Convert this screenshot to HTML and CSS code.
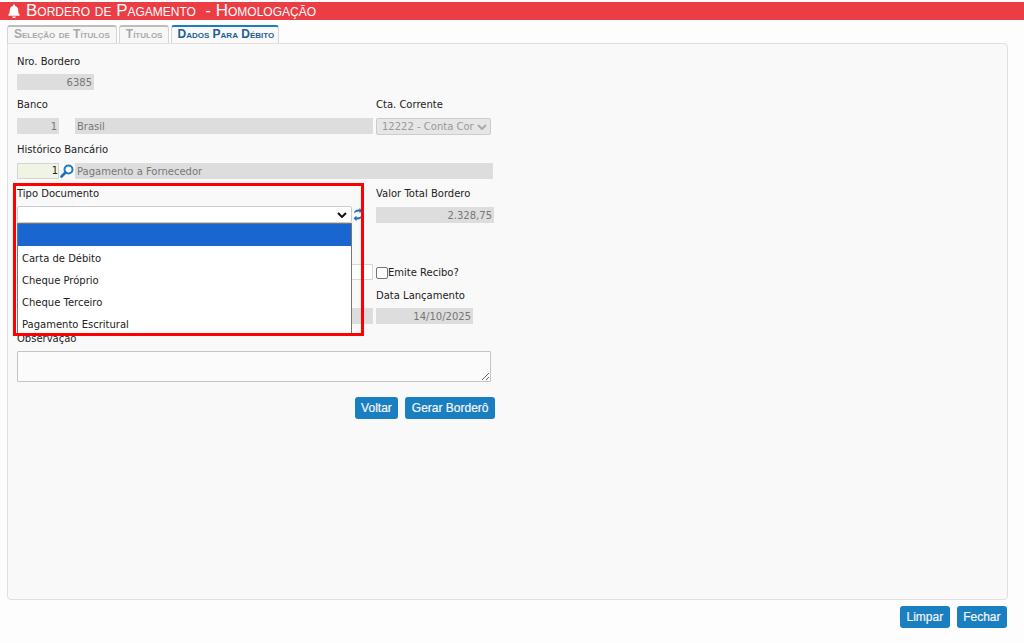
FILE: index.html
```html
<!DOCTYPE html>
<html lang="pt-BR">
<head>
<meta charset="utf-8">
<title>Bordero de Pagamento</title>
<link rel="stylesheet" href="styles.css">
</head>
<body>
<header class="title-bar">
  <svg class="bell" viewBox="0 0 12 14" width="12" height="14"><path d="M6 0.5c.6 0 1 .4 1 1v.5c2 .4 3.2 2 3.2 4 0 3 .6 3.800 1.500 4.800.3.400 0 .9-.4.9H.7c-.4 0-.7-.5-.4-.9C1.200 9.800 1.800 9 1.800 6c0-2 1.200-3.600 3.200-4v-.5c0-.6.400-1 1-1zM4.300 12.500h3.400c0 1-.7 1.500-1.700 1.500s-1.700-.5-1.700-1.500z" fill="#fff"/></svg>
  <h1 class="title">Bordero de Pagamento &nbsp;- Homologação</h1>
</header>
<nav class="tabs">
  <span class="tab">Seleção de Títulos</span>
  <span class="tab">Títulos</span>
  <span class="tab active">Dados Para Débito</span>
</nav>
<main class="panel">
  <div class="row row-a">
    <div class="field tight">
      <label class="label">Nro. Bordero</label>
      <div class="input ro right w-nro">6385</div>
    </div>
  </div>
  <div class="row row-b">
    <div class="field col-left">
      <label class="label">Banco</label>
      <div class="controls gap-16">
        <div class="input ro right w-banco">1</div>
        <div class="input ro grow">Brasil</div>
      </div>
    </div>
    <div class="field">
      <label class="label">Cta. Corrente</label>
      <div class="fake-select disabled">12222 - Conta Cor<svg class="chev" viewBox="0 0 10 6" width="10" height="6"><path d="M1 1l4 4 4-4" fill="none" stroke="#aaa" stroke-width="2"/></svg></div>
    </div>
  </div>
  <div class="row row-c">
    <div class="field wide">
      <label class="label">Histórico Bancário</label>
      <div class="controls">
        <div class="input edit right w-hist">1</div>
        <svg class="search" viewBox="0 0 14 14" width="14" height="14"><circle cx="8.500" cy="5.500" r="4" fill="#fff" stroke="#1c7bc4" stroke-width="2"/><path d="M5.500 8.500L1.500 12.500" stroke="#1c6fb8" stroke-width="2.600" stroke-linecap="round"/></svg>
        <div class="input ro grow">Pagamento a Fornecedor</div>
      </div>
    </div>
  </div>
  <div class="row row-d">
    <div class="field col-left tight">
      <label class="label">Tipo Documento</label>
      <div class="controls">
        <div class="fake-select open">&nbsp;<svg class="chev" viewBox="0 0 10 6" width="10" height="6"><path d="M1 1l4 4 4-4" fill="none" stroke="#111" stroke-width="2"/></svg></div>
        <svg class="refresh" viewBox="0 0 10 15" width="10" height="15"><path d="M1 6.500C1 3.500 3.500 2 6.500 2.500V.8L9.500 3.800 6.500 6.300V4.700C4.500 4.300 3 5 1 6.500zM9 8.500c0 3-2.500 4.500-5.500 4V14.200L.5 11.200 3.500 8.700v1.600C5.500 10.700 7 10 9 8.500z" fill="#1c74c9"/></svg>
      </div>
    </div>
    <div class="field">
      <label class="label">Valor Total Bordero</label>
      <div class="input ro right w-valor">2.328,75</div>
    </div>
  </div>
  <div class="row row-e">
    <div class="input plain col-left-input"></div>
    <label class="check"><span class="box"></span>Emite Recibo?</label>
  </div>
  <div class="row row-f">
    <div class="field col-left tight">
      <label class="label">&nbsp;</label>
      <div class="input ro col-left-input"></div>
    </div>
    <div class="field tight">
      <label class="label">Data Lançamento</label>
      <div class="input ro right w-data">14/10/2025</div>
    </div>
  </div>
  <div class="row-g">
    <label class="label">Observação</label>
    <textarea class="obs"></textarea>
  </div>
  <div class="actions">
    <button class="btn">Voltar</button>
    <button class="btn">Gerar Borderô</button>
  </div>

  <ul class="dropdown">
    <li class="opt selected">&nbsp;</li>
    <li class="opt">Carta de Débito</li>
    <li class="opt">Cheque Próprio</li>
    <li class="opt">Cheque Terceiro</li>
    <li class="opt">Pagamento Escritural</li>
  </ul>
  <div class="highlight"></div>
</main>
<footer class="footer">
  <button class="btn">Limpar</button>
  <button class="btn">Fechar</button>
</footer>
</body>
</html>
```
FILE: styles.css
```css
* { box-sizing: border-box; }
html, body { height: 100%; }
body {
  margin: 0;
  padding-top: 2px;
  background: #fdfdfd;
  font-family: "DejaVu Sans", Verdana, sans-serif;
  font-size: 10px;
  color: #222;
  overflow: hidden;
}
.title-bar {
  height: 18px;
  background: #ec3c44;
  display: flex;
  align-items: center;
  padding-left: 8px;
  gap: 6px;
}
.bell { flex: none; }
.title {
  margin: 0;
  font: normal 17px/18px "Liberation Sans", Arial, sans-serif;
  font-variant: small-caps;
  color: #fff;
}
.tabs {
  display: flex;
  gap: 2px;
  height: 20px;
  margin-top: 4px;
  padding-left: 7px;
  align-items: flex-end;
}
.tab {
  height: 19px;
  padding: 0 6px 0 6px;
  border: 1px solid #d5d5d5;
  border-bottom: 0;
  border-top: 2px solid #bdbdbd;
  border-radius: 3px 3px 0 0;
  background: #f7f7f7;
  color: #a9a9a9;
  font: bold 12px/15px "Liberation Sans", Arial, sans-serif;
  font-variant: small-caps;
}
.tab.active {
  height: 20px;
  color: #1f5f94;
  border-top: 2px solid #1b7cc0;
  background: #f9f9f9;
  position: relative;
  margin-bottom: -1px;
  padding: 0 4px 0 5px;
}
.panel {
  position: relative;
  margin: -1px 16px 0 7px;
  height: 557px;
  border: 1px solid #dfdfdf;
  border-radius: 0 4px 4px 4px;
  background: #f9f9f9;
  padding: 11px 9px 0 9px;
}
.row { display: flex; gap: 3px; }
.row-a { height: 43px; }
.row-b { height: 45px; }
.row-c { height: 44px; }
.row-d { height: 58px; }
.row-e { height: 25px; align-items: flex-start; margin-top: 19px; }
.row-f { height: 44px; }
.row-g { display: flex; flex-direction: column; margin-top: -1px; }
.field { display: flex; flex-direction: column; }
.col-left { width: 356px; }
.wide { width: 476px; }
.label { height: 20px; line-height: 13px; color: #222; }
.tight > .label { height: 19px; }
.row-g > .label { height: 19px; }
.controls { display: flex; align-items: center; }
.gap-16 { gap: 16px; }
.grow { flex: 1; }
.input {
  height: 16px;
  line-height: 16px;
  padding: 1px 2px 0;
  color: #777;
  overflow: hidden;
  white-space: nowrap;
}
.ro { background: #dddddd; }
.right { text-align: right; }
.w-nro { width: 77px; }
.w-banco { width: 42px; }
.w-hist { width: 42px; color: #222; }
.w-valor { width: 118px; }
.w-data { width: 97px; }
.col-left-input { width: 356px; }
.edit { background: #f0f4e4; border: 1px solid #d4d4d4; line-height: 14px; padding: 0 0 0 2px; }
.plain { background: #fff; border: 1px solid #d8d8d8; }
.search { flex: none; margin: 0 1px; }
.refresh { flex: none; margin-left: 1px; }
.fake-select {
  height: 17px;
  background: #fff;
  border: 1px solid #ccc;
  border-radius: 2px;
  line-height: 15px;
  display: flex;
  align-items: center;
  justify-content: space-between;
  padding: 0 4px;
  overflow: hidden;
  white-space: nowrap;
}
.fake-select.open { width: 335px; }
.fake-select.disabled {
  width: 115px;
  background: #e6e6e6;
  color: #999;
  padding: 0 3px 0 5px;
  overflow: hidden;
}
.chev { flex: none; }
.check { display: flex; align-items: center; height: 13px; line-height: 13px; margin-top: 2px; }
.box {
  width: 12px; height: 12px;
  background: #fff;
  border: 1px solid #767676;
  border-radius: 2px;
}
.obs {
  display: block;
  width: 474px;
  height: 31px;
  margin-top: 0;
  background: #fbfbfb;
  border: 1px solid #c4c4c4;
  border-radius: 1px;
  padding: 0;
}
.actions {
  display: flex;
  justify-content: flex-end;
  gap: 7px;
  width: 478px;
  margin-top: 15px;
}
.btn {
  height: 22px;
  padding: 0 6.5px;
  border: 0;
  border-radius: 3px;
  background: #1a7fc1;
  color: #f5f5f5;
  font: normal 12px/22px "Liberation Sans", Arial, sans-serif;
  -webkit-text-stroke: 0.2px #f5f5f5;
}
.dropdown {
  position: absolute;
  left: 9px;
  top: 179px;
  width: 335px;
  height: 113px;
  margin: 0;
  padding: 0;
  list-style: none;
  background: #fff;
  border: 1px solid #767676;
  border-bottom: 0;
}
.opt { height: 22px; line-height: 22px; padding: 2px 0 0 4px; color: #222; }
.selected { background: #1a66d0; height: 22px; }
.highlight {
  position: absolute;
  left: 5px;
  top: 139px;
  width: 351px;
  height: 153px;
  border: 3px solid #ff0000;
}
.footer {
  display: flex;
  justify-content: flex-end;
  gap: 7px;
  padding-right: 17px;
  margin-top: 6px;
}
```
